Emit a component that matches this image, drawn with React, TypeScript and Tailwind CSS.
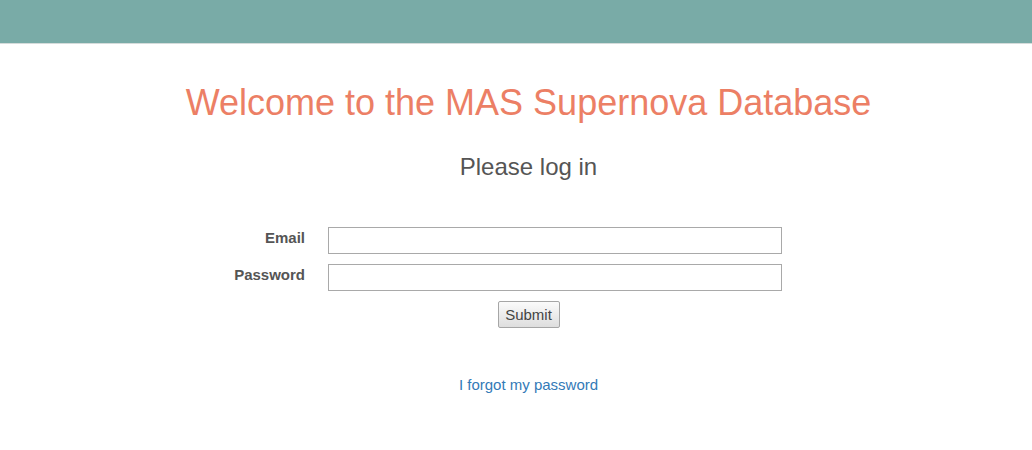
export default function App() {
  return (
    <div className="min-h-[450px] bg-white font-['Liberation_Sans',Arial,sans-serif] text-[#555]">
      <div className="h-[44px] border-b border-[#d5dcdb] bg-[#79aba7]" />

      <main className="flex flex-col items-center pl-[25px]">
        <h1 className="mt-[37px] text-[36px] leading-[44px] text-[#ec7f65]">
          Welcome to the MAS Supernova Database
        </h1>
        <h2 className="mt-[27px] text-[24px] leading-[30px] text-[#555]">Please log in</h2>

        <form className="mt-[45px] grid grid-cols-[100px_454px_47px] gap-x-[23px] gap-y-[10px]">
          <label className="pt-[2px] text-right text-[15px] font-bold leading-[18px]">Email</label>
          <input type="email" className="h-[27px] border border-[#a9a9a9] bg-white px-1 outline-none" />
          <div />

          <label className="pt-[2px] text-right text-[15px] font-bold leading-[18px]">Password</label>
          <input type="password" className="h-[27px] border border-[#a9a9a9] bg-white px-1 outline-none" />
          <div />
        </form>

        <button
          type="button"
          className="mt-[10px] h-[27px] w-[62px] rounded-[2px] border border-[#a6a6a6] bg-gradient-to-b from-[#fbfbfb] to-[#dedede] pt-px text-[15px] text-[#444]"
        >
          Submit
        </button>

        <a href="#" className="mt-[48px] text-[15px] leading-[18px] text-[#337ab7]">
          I forgot my password
        </a>
      </main>
    </div>
  );
}
